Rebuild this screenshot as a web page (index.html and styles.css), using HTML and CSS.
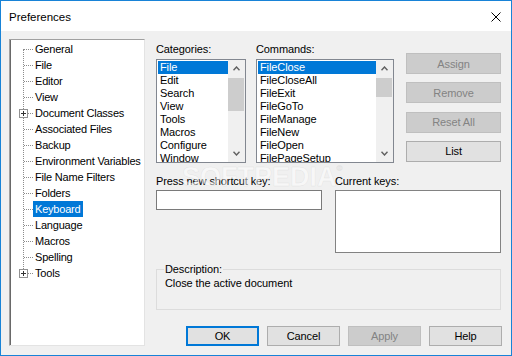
FILE: index.html
```html
<!DOCTYPE html>
<html lang="en">
<head>
    <meta charset="UTF-8">
    <title>Preferences</title>
    <link rel="stylesheet" href="styles.css">
</head>
<body>
    <div class="window">
        <div class="titlebar">
            <span class="title">Preferences</span>
            <svg class="close" width="10" height="10" viewBox="0 0 10 10">
                <path d="M0.5 0.5 L9.5 9.5 M9.5 0.5 L0.5 9.5" stroke="#000" stroke-width="1" fill="none"/>
            </svg>
        </div>

        <div class="dialog">
            <div class="tree">
                <ul class="tree-list">
                    <li><span>General</span></li>
                    <li><span>File</span></li>
                    <li><span>Editor</span></li>
                    <li><span>View</span></li>
                    <li class="has-children"><i class="expander"></i><span>Document Classes</span></li>
                    <li><span>Associated Files</span></li>
                    <li><span>Backup</span></li>
                    <li><span>Environment Variables</span></li>
                    <li><span>File Name Filters</span></li>
                    <li><span>Folders</span></li>
                    <li class="selected"><span>Keyboard</span></li>
                    <li><span>Language</span></li>
                    <li><span>Macros</span></li>
                    <li><span>Spelling</span></li>
                    <li class="has-children"><i class="expander"></i><span>Tools</span></li>
                </ul>
            </div>

            <div class="panel">
                <div class="top">
                    <div class="field categories">
                        <div class="label">Categories:</div>
                        <div class="listbox">
                            <div class="list-items">
                                <div class="selected">File</div>
                                <div>Edit</div>
                                <div>Search</div>
                                <div>View</div>
                                <div>Tools</div>
                                <div>Macros</div>
                                <div>Configure</div>
                                <div>Window</div>
                            </div>
                            <div class="scrollbar">
                                <div class="arrow">
                                    <svg width="7" height="5" viewBox="0 0 7 5"><path d="M0.5 4.3 L3.5 1 L6.5 4.3" fill="none" stroke="#606060" stroke-width="1.4"/></svg>
                                </div>
                                <div class="thumb cat-thumb"></div>
                                <div class="track"></div>
                                <div class="arrow">
                                    <svg width="7" height="5" viewBox="0 0 7 5"><path d="M0.5 0.7 L3.5 4 L6.5 0.7" fill="none" stroke="#606060" stroke-width="1.4"/></svg>
                                </div>
                            </div>
                        </div>
                    </div>

                    <div class="field commands">
                        <div class="label">Commands:</div>
                        <div class="listbox">
                            <div class="list-items">
                                <div class="selected">FileClose</div>
                                <div>FileCloseAll</div>
                                <div>FileExit</div>
                                <div>FileGoTo</div>
                                <div>FileManage</div>
                                <div>FileNew</div>
                                <div>FileOpen</div>
                                <div>FilePageSetup</div>
                            </div>
                            <div class="scrollbar">
                                <div class="arrow">
                                    <svg width="7" height="5" viewBox="0 0 7 5"><path d="M0.5 4.3 L3.5 1 L6.5 4.3" fill="none" stroke="#606060" stroke-width="1.4"/></svg>
                                </div>
                                <div class="thumb cmd-thumb"></div>
                                <div class="track"></div>
                                <div class="arrow">
                                    <svg width="7" height="5" viewBox="0 0 7 5"><path d="M0.5 0.7 L3.5 4 L6.5 0.7" fill="none" stroke="#606060" stroke-width="1.4"/></svg>
                                </div>
                            </div>
                        </div>
                    </div>

                    <div class="side-buttons">
                        <div class="btn disabled">Assign</div>
                        <div class="btn disabled">Remove</div>
                        <div class="btn disabled">Reset All</div>
                        <div class="btn">List</div>
                    </div>
                </div>

                <div class="keys">
                    <div class="field">
                        <div class="label">Press new shortcut key:</div>
                        <div class="input"></div>
                    </div>
                    <div class="field">
                        <div class="label">Current keys:</div>
                        <div class="keylist"></div>
                    </div>
                </div>

                <fieldset class="desc">
                    <legend>Description:</legend>
                    <p>Close the active document</p>
                </fieldset>

                <div class="dialog-buttons">
                    <div class="btn default">OK</div>
                    <div class="btn">Cancel</div>
                    <div class="btn disabled">Apply</div>
                    <div class="btn">Help</div>
                </div>
            </div>
        </div>

        <div class="watermark">SOFTPEDIA<sup>®</sup></div>
    </div>
</body>
</html>
```

FILE: styles.css
```css
* {
    box-sizing: border-box;
}

html, body {
    margin: 0;
    padding: 0;
}

body {
    font-family: "Liberation Sans", Arial, sans-serif;
    font-size: 11px;
    letter-spacing: -0.1px;
    color: #000;
    background: #fff;
}

.window {
    position: relative;
    width: 512px;
    height: 356px;
    border: 1px solid #1883d7;
    background: #f0f0f0;
    display: flex;
    flex-direction: column;
    overflow: hidden;
}

.titlebar {
    height: 30px;
    flex-shrink: 0;
    background: #fff;
    display: flex;
    align-items: center;
    justify-content: space-between;
    padding: 0 10px 0 8px;
}

.title {
    font-size: 11.5px;
    letter-spacing: 0;
    margin-top: 1px;
}

.close {
    display: block;
    margin-top: 1px;
}

.dialog {
    flex: 1;
    display: flex;
    align-items: flex-start;
    padding: 8px 9px 9px 8px;
}

/* left tree */
.tree {
    width: 136px;
    height: 307px;
    flex-shrink: 0;
    background: #fff;
    border: 1px solid;
    border-color: #a0a0a0 #e3e3e3 #e3e3e3 #a0a0a0;
    box-shadow: inset 1px 0 0 #696969;
    overflow: hidden;
}

.tree-list {
    list-style: none;
    margin: 0;
    padding: 1px 0 0;
    position: relative;
    letter-spacing: -0.2px;
}

.tree-list::before {
    content: "";
    position: absolute;
    left: 13px;
    top: 9px;
    height: 224px;
    border-left: 1px dotted #8c8c8c;
}

.tree-list li {
    position: relative;
    height: 16px;
    line-height: 16px;
    padding-left: 23px;
    white-space: nowrap;
}

.tree-list li::before {
    content: "";
    position: absolute;
    left: 14px;
    top: 8px;
    width: 9px;
    border-top: 1px dotted #8c8c8c;
}

.tree-list li span {
    display: inline-block;
    padding: 0 2px;
}

.tree-list li.selected span {
    background: #0078d7;
    color: #fff;
}

.expander {
    position: absolute;
    left: 9px;
    top: 4px;
    width: 9px;
    height: 9px;
    border: 1px solid #919191;
    background: #fff;
    z-index: 1;
}

.expander::before,
.expander::after {
    content: "";
    position: absolute;
    background: #333;
}

.expander::before {
    left: 1px;
    top: 3px;
    width: 5px;
    height: 1px;
}

.expander::after {
    left: 3px;
    top: 1px;
    width: 1px;
    height: 5px;
}

/* right panel */
.panel {
    width: 346px;
    margin-left: 11px;
    display: flex;
    flex-direction: column;
}

.label {
    height: 13px;
    line-height: 13px;
    white-space: nowrap;
}

.top {
    display: flex;
    align-items: flex-start;
}

.top .label {
    margin: 4px 0 3px;
}

.categories {
    width: 90px;
}

.commands {
    width: 138px;
    margin-left: 10px;
}

.listbox {
    height: 104px;
    background: #fff;
    border: 1px solid #828790;
    display: flex;
    overflow: hidden;
}

.list-items {
    flex: 1;
    padding: 1px 0 0 1px;
    overflow: hidden;
}

.list-items div {
    height: 13px;
    line-height: 13px;
    padding-left: 2px;
    white-space: nowrap;
}

.list-items .selected {
    background: #0078d7;
    color: #fff;
}

.scrollbar {
    width: 17px;
    flex-shrink: 0;
    background: #f0f0f0;
    display: flex;
    flex-direction: column;
}

.arrow {
    height: 17px;
    flex-shrink: 0;
    display: flex;
    align-items: center;
    justify-content: center;
}

.arrow svg {
    display: block;
}

.thumb {
    background: #cdcdcd;
    margin: 1px 1px 0 0;
}

.cat-thumb {
    height: 33px;
}

.cmd-thumb {
    height: 19px;
}

.track {
    flex: 1;
}

.side-buttons {
    width: 95px;
    margin-left: 12px;
    margin-top: 14px;
    display: flex;
    flex-direction: column;
    gap: 8.3px;
}

.btn {
    height: 21px;
    border: 1px solid #adadad;
    background: #e1e1e1;
    display: flex;
    align-items: center;
    justify-content: center;
    white-space: nowrap;
}

.btn.disabled {
    background: #cccccc;
    border-color: #bfbfbf;
    color: #838383;
}

.btn.default {
    border-color: #0078d7;
    box-shadow: inset 0 0 0 1px #0078d7;
}

.keys {
    display: flex;
    gap: 13px;
    margin-top: 12px;
}

.keys .field {
    width: 166px;
}

.keys .label {
    margin-bottom: 2px;
}

.input {
    height: 20px;
    background: #fff;
    border: 1px solid #7a7a7a;
}

.keylist {
    height: 63px;
    background: #fff;
    border: 1px solid #828282;
}

.desc {
    width: 345px;
    min-width: 0;
    margin: 10px 0 0;
    padding: 0 8px 19px 7px;
    border: 1px solid #dcdcdc;
}

.desc legend {
    padding: 0 1px;
    line-height: 13px;
}

.desc p {
    margin: 1px 0 0;
    padding-left: 1px;
    line-height: 13px;
}

.dialog-buttons {
    display: flex;
    justify-content: flex-end;
    gap: 8px;
    margin-top: 16px;
}

.dialog-buttons .btn {
    width: 73px;
    height: 20px;
}

/* faint site watermark over the dialog */
.watermark {
    position: absolute;
    left: 181px;
    top: 163px;
    font-size: 27px;
    line-height: 27px;
    font-weight: bold;
    letter-spacing: 0;
    color: rgba(255, 255, 255, 0.5);
    -webkit-text-stroke: 0.5px rgba(170, 170, 170, 0.22);
    pointer-events: none;
}

.watermark sup {
    font-size: 8px;
    vertical-align: top;
    line-height: 10px;
}
```
